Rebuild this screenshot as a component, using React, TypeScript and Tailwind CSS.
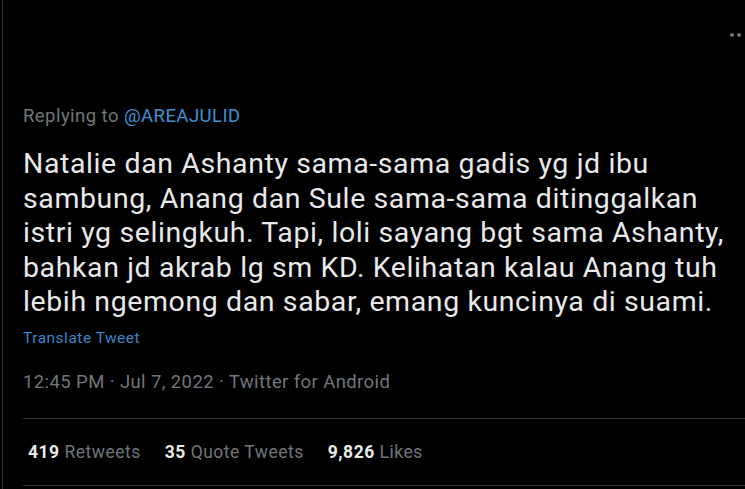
import React from "react";

const lines = [
  "Natalie dan Ashanty sama-sama gadis yg jd ibu",
  "sambung, Anang dan Sule sama-sama ditinggalkan",
  "istri yg selingkuh. Tapi, loli sayang bgt sama Ashanty,",
  "bahkan jd akrab lg sm KD. Kelihatan kalau Anang tuh",
  "lebih ngemong dan sabar, emang kuncinya di suami.",
];

const stats = [
  { count: "419", label: "Retweets" },
  { count: "35", label: "Quote Tweets" },
  { count: "9,826", label: "Likes" },
];

export default function App() {
  return (
    <div className="w-[745px] h-[489px] overflow-hidden bg-black font-['Roboto',sans-serif]">
      <div className="relative h-full border-l border-[#2f3336] ml-[2px]">
        {/* cut-off "more" dots in the top right */}
        <div className="absolute right-[4px] top-[33px] flex gap-[3px]">
          <span className="w-[4px] h-[4px] rounded-full bg-[#6e767d]" />
          <span className="w-[4px] h-[4px] rounded-full bg-[#6e767d]" />
        </div>

        <div className="pl-[20px] pt-[105px]">
          <div className="text-[18.5px] leading-[22px] tracking-[0.45px] text-[#71767b]">
            Replying to <span className="text-[#3d94d6]">@AREAJULID</span>
          </div>

          <div className="mt-[20px] text-[28.5px] leading-[34.5px] tracking-[0.6px] text-[#e7e9ea] whitespace-nowrap">
            {lines.map((l) => (
              <div key={l}>{l}</div>
            ))}
          </div>

          <div className="mt-[9px] text-[15.5px] leading-[18px] tracking-[0.5px] text-[#3d86c6]">Translate Tweet</div>

          <div className="mt-[24px] text-[18.5px] leading-[22px] tracking-[0.4px] text-[#71767b]">
            12:45 PM · Jul 7, 2022 · Twitter for Android
          </div>

          <div className="mt-[25px] border-t border-[#2f3336]" />

          <div className="flex gap-[24px] pl-[5px] pt-[22px] pb-[22px] text-[17.5px] leading-[22px] tracking-[0.5px]">
            {stats.map((s) => (
              <div key={s.label}>
                <span className="font-bold text-[#e7e9ea]">{s.count}</span>{" "}
                <span className="text-[#71767b]">{s.label}</span>
              </div>
            ))}
          </div>

          <div className="border-t border-[#2f3336]" />
        </div>
      </div>
    </div>
  );
}
